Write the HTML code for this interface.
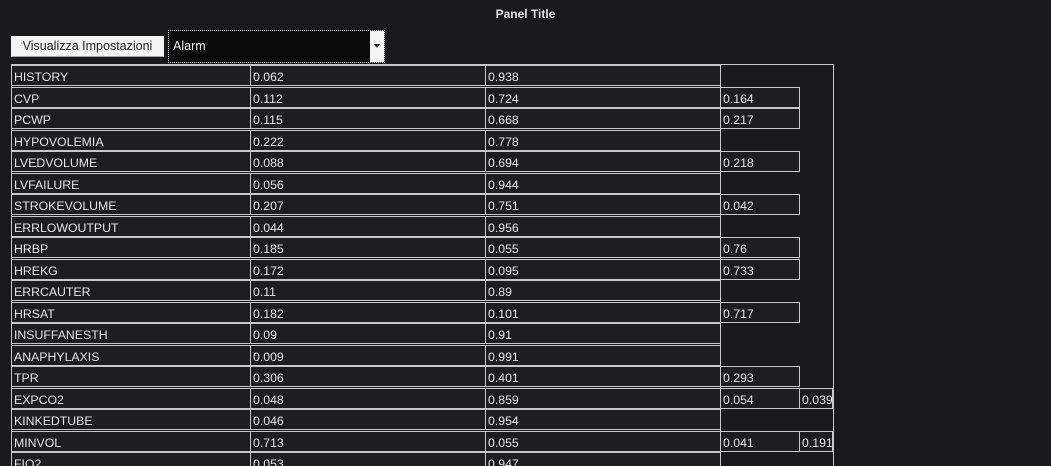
<!DOCTYPE html>
<html><head><meta charset="utf-8"><style>
*{box-sizing:border-box;margin:0;padding:0}
html,body{width:1051px;height:466px;overflow:hidden;background:#1a1a1c;font-family:"Liberation Sans",sans-serif;font-size:12px;color:#e6e6e6;position:relative}
.t{position:absolute;left:0;width:1051px;top:7px;text-align:center;font-weight:bold;font-size:12px;color:#e0e0e0}
.btn{position:absolute;left:11px;top:36px;width:153px;height:21px;background:#f4f4f4;color:#222;font-size:12.5px;text-align:center;line-height:21px;border-bottom:1px solid #aaa}
.sel{position:absolute;left:168px;top:30px;width:217px;height:33px;background:#0b0b0c;border:1px dotted #ddd;font-size:12.5px;line-height:31px;padding-left:4px;color:#eee}
.arr{position:absolute;right:0;top:0;width:14px;height:31px;background:#f4f4f4}
.arr:after{content:"";position:absolute;left:4px;top:13px;border-left:3px solid transparent;border-right:3px solid transparent;border-top:4px solid #222}
.box{position:absolute;left:11px;top:64px;width:823px;height:402px;border-left:1px solid #c8c8c8;border-right:1px solid #c8c8c8;border-top:1px solid #c8c8c8}
.vl{position:absolute;left:720px;top:64px;width:1px;height:402px;background:#c8c8c8}
.r{position:absolute;left:0;width:1051px;height:21px}
.c{position:absolute;top:0;height:21px;border:1px solid #c8c8c8;background:#1e1e21;padding-left:2px;padding-top:1px;line-height:20px;font-size:12.3px;white-space:nowrap;overflow:hidden}
.a{left:11px;width:240px}.b{left:250px;width:236px}.d{left:485px;width:236px}.e{left:720px;width:80px}.f{left:799px;width:34px}
</style></head><body>
<div class="t">Panel Title</div>
<div class="btn">Visualizza Impostazioni</div>
<div class="sel">Alarm<div class="arr"></div></div>
<div class="box"></div><div class="vl"></div>
<div class="r" style="top:65px"><div class="c a">HISTORY</div><div class="c b">0.062</div><div class="c d">0.938</div></div>
<div class="r" style="top:87px"><div class="c a">CVP</div><div class="c b">0.112</div><div class="c d">0.724</div><div class="c e">0.164</div></div>
<div class="r" style="top:108px"><div class="c a">PCWP</div><div class="c b">0.115</div><div class="c d">0.668</div><div class="c e">0.217</div></div>
<div class="r" style="top:130px"><div class="c a">HYPOVOLEMIA</div><div class="c b">0.222</div><div class="c d">0.778</div></div>
<div class="r" style="top:151px"><div class="c a">LVEDVOLUME</div><div class="c b">0.088</div><div class="c d">0.694</div><div class="c e">0.218</div></div>
<div class="r" style="top:173px"><div class="c a">LVFAILURE</div><div class="c b">0.056</div><div class="c d">0.944</div></div>
<div class="r" style="top:194px"><div class="c a">STROKEVOLUME</div><div class="c b">0.207</div><div class="c d">0.751</div><div class="c e">0.042</div></div>
<div class="r" style="top:216px"><div class="c a">ERRLOWOUTPUT</div><div class="c b">0.044</div><div class="c d">0.956</div></div>
<div class="r" style="top:237px"><div class="c a">HRBP</div><div class="c b">0.185</div><div class="c d">0.055</div><div class="c e">0.76</div></div>
<div class="r" style="top:259px"><div class="c a">HREKG</div><div class="c b">0.172</div><div class="c d">0.095</div><div class="c e">0.733</div></div>
<div class="r" style="top:280px"><div class="c a">ERRCAUTER</div><div class="c b">0.11</div><div class="c d">0.89</div></div>
<div class="r" style="top:302px"><div class="c a">HRSAT</div><div class="c b">0.182</div><div class="c d">0.101</div><div class="c e">0.717</div></div>
<div class="r" style="top:323px"><div class="c a">INSUFFANESTH</div><div class="c b">0.09</div><div class="c d">0.91</div></div>
<div class="r" style="top:345px"><div class="c a">ANAPHYLAXIS</div><div class="c b">0.009</div><div class="c d">0.991</div></div>
<div class="r" style="top:366px"><div class="c a">TPR</div><div class="c b">0.306</div><div class="c d">0.401</div><div class="c e">0.293</div></div>
<div class="r" style="top:388px"><div class="c a">EXPCO2</div><div class="c b">0.048</div><div class="c d">0.859</div><div class="c e">0.054</div><div class="c f">0.039</div></div>
<div class="r" style="top:409px"><div class="c a">KINKEDTUBE</div><div class="c b">0.046</div><div class="c d">0.954</div></div>
<div class="r" style="top:431px"><div class="c a">MINVOL</div><div class="c b">0.713</div><div class="c d">0.055</div><div class="c e">0.041</div><div class="c f">0.191</div></div>
<div class="r" style="top:452px;height:14px;overflow:hidden"><div class="c a">FIO2</div><div class="c b">0.053</div><div class="c d">0.947</div></div>
</body></html>
